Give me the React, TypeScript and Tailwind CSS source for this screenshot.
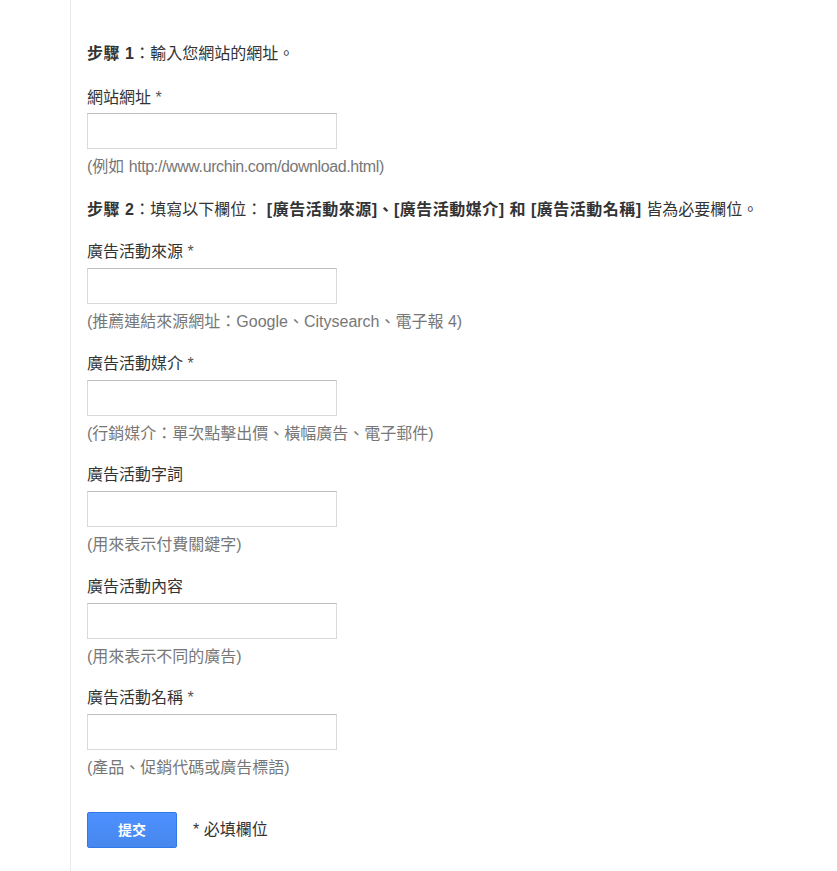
const font = "font-['Arial','Liberation_Sans','Noto_Sans_CJK_TC',sans-serif]";

type Field = { label: string; required?: boolean; hint: string };

const fields: Field[] = [
  { label: "廣告活動來源", required: true, hint: "(推薦連結來源網址：Google、Citysearch、電子報 4)" },
  { label: "廣告活動媒介", required: true, hint: "(行銷媒介：單次點擊出價、橫幅廣告、電子郵件)" },
  { label: "廣告活動字詞", hint: "(用來表示付費關鍵字)" },
  { label: "廣告活動內容", hint: "(用來表示不同的廣告)" },
  { label: "廣告活動名稱", required: true, hint: "(產品、促銷代碼或廣告標語)" },
];

const inputCls =
  "block h-[36px] w-[250px] border border-[#d9d9d9] border-t-[#c0c0c0] bg-white px-2 outline-none";

function FieldGroup({ label, required, hint }: Field) {
  return (
    <div className="mb-[21.5px]">
      <div className="leading-[20px] text-[#333]">
        {label}
        {required && <span className="text-[#555]"> *</span>}
      </div>
      <input type="text" className={`mt-[6px] ${inputCls}`} />
      <div className="mt-[8px] leading-[20px] text-[#777]">{hint}</div>
    </div>
  );
}

export default function App() {
  return (
    <div className={`min-h-[871px] bg-white ${font} text-[16px]`}>
      <div className="ml-[70px] min-h-[871px] border-l border-[#ebebeb] pl-[16px] pt-[44px]">
        <p className="leading-[20px] text-[#333]">
          <b className="tracking-[0.5px]">步驟 1</b>：輸入您網站的網址。
        </p>

        {/* step 1 */}
        <div className="mt-[24px] mb-[23px]">
          <div className="leading-[20px] text-[#333]">
            網站網址<span className="text-[#555]"> *</span>
          </div>
          <input type="text" className={`mt-[5px] ${inputCls}`} />
          <div className="mt-[8px] leading-[20px] text-[#777]">
            (例如 <span className="tracking-[-0.4px]">http://www.urchin.com/download.html</span>)
          </div>
        </div>

        <p className="mb-[22px] leading-[20px] text-[#333]">
          <b className="tracking-[0.5px]">步驟 2</b>：填寫以下欄位：{" "}
          <b className="tracking-[0.5px]">[廣告活動來源]、[廣告活動媒介] 和 [廣告活動名稱]</b> 皆為必要欄位。
        </p>

        {fields.map((f) => (
          <FieldGroup key={f.label} {...f} />
        ))}

        <div className="mt-[34px] flex items-center gap-[16px]">
          <button
            type="button"
            className="h-[36px] w-[90px] rounded-[2px] border border-[#3079ed] bg-gradient-to-b from-[#4d90fe] to-[#4787ed] text-[14px] font-bold text-white"
          >
            提交
          </button>
          <span className="text-[#333]">* 必填欄位</span>
        </div>
      </div>
    </div>
  );
}
